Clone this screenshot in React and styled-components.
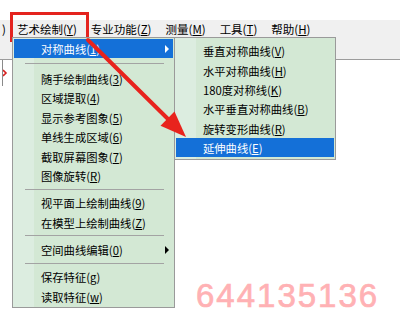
import React from "react";
import styled, { createGlobalStyle, css } from "styled-components";

const GlobalStyle = createGlobalStyle`
  html, body { margin: 0; padding: 0; background: #ffffff; }
  body { font-family: "Noto Sans CJK SC", "Noto Sans", sans-serif; }
`;

const Screen = styled.div`
  position: relative;
  width: 400px;
  height: 326px;
  overflow: hidden;
  background: #ffffff;
  display: flex;
  flex-direction: column;
  color: #000;
`;

const TopGap = styled.div`
  height: 20px;
  flex: none;
`;

const MenuBar = styled.div`
  height: 17px;
  flex: none;
  background: #f0f0f0;
  display: flex;
  align-items: center;
  font-size: 11.5px;
`;

const BarItem = styled.div`
  position: relative;
  padding: ${(p) => (p.$cut ? "0 4px 0 2px" : "0 7px")};
  line-height: 17px;
  padding-top: 1px;
  white-space: nowrap;
  ${(p) =>
    p.$marked &&
    css`
      &::after {
        content: "";
        position: absolute;
        left: 0;
        right: -5px;
        top: -8px;
        bottom: -4px;
        border: 3px solid #e4231e;
      }
    `}
`;

const Toolbar = styled.div`
  height: 22px;
  flex: none;
  background: #f0f0f0;
  border-bottom: 1px solid #9c9c9c;
`;

const Workspace = styled.div`
  flex: 1;
  padding-left: 2px;
`;

const CanvasEdge = styled.div`
  width: 6px;
  height: 26px;
  border-left: 1px solid #8a8a8a;
  display: flex;
  align-items: center;
`;

const DropMenu = styled.div`
  position: absolute;
  left: ${(p) => p.$left}px;
  top: ${(p) => p.$top}px;
  width: ${(p) => p.$width}px;
  box-sizing: border-box;
  border: 1px solid #9a9a9a;
  background: linear-gradient(to right, #dcede0 0 21px, #d3e8d4 21px);
  padding: ${(p) => p.$pad};
  font-size: 11.3px;
  display: flex;
  flex-direction: column;
`;

const MenuRow = styled.div`
  position: relative;
  height: 19.4px;
  box-sizing: border-box;
  margin: 0 1px;
  padding: 1px 0 0 27px;
  display: flex;
  align-items: center;
  white-space: nowrap;
  background: ${(p) => (p.$active ? "#1470d8" : "transparent")};
  color: ${(p) => (p.$active ? "#ffffff" : "#000000")};
  u { text-underline-offset: 1px; }
`;

const Caret = styled.span`
  position: absolute;
  right: 4px;
  top: 50%;
  margin-top: -3.5px;
  width: 0;
  height: 0;
  border-left: 4px solid currentColor;
  border-top: 4px solid transparent;
  border-bottom: 4px solid transparent;
`;

const Separator = styled.div`
  height: ${(p) => p.$h}px;
  display: flex;
  align-items: center;
  padding: 0 10px 0 12px;
  &::before {
    content: "";
    flex: 1;
    height: 1px;
    background: #a3a3a3;
  }
`;

const Overlay = styled.svg`
  position: absolute;
  left: 0;
  top: 0;
  pointer-events: none;
`;

const Watermark = styled.div`
  position: absolute;
  left: 196px;
  top: 279px;
  font-family: "Liberation Sans", Arial, sans-serif;
  font-size: 33px;
  line-height: 33px;
  letter-spacing: 2px;
  color: #ffb1b4;
  -webkit-text-stroke: 0.7px #ffb1b4;
  pointer-events: none;
`;

const Item = ({ label, k, active, sub }) => (
  <MenuRow $active={active}>
    <span>
      {label}(<u>{k}</u>)
    </span>
    {sub && <Caret />}
  </MenuRow>
);

const mainGroups = [
  { sep: 10.4, items: [["对称曲线", "1", true, true]] },
  {
    sep: 8,
    items: [
      ["随手绘制曲线", "3"],
      ["区域提取", "4"],
      ["显示参考图象", "5"],
      ["单线生成区域", "6"],
      ["截取屏幕图象", "7"],
      ["图像旋转", "R"],
    ],
  },
  {
    sep: 8,
    items: [
      ["视平面上绘制曲线", "9"],
      ["在模型上绘制曲线", "Z"],
    ],
  },
  { sep: 8, items: [["空间曲线编辑", "0", false, true]] },
  {
    sep: 0,
    items: [
      ["保存特征", "g"],
      ["读取特征", "w"],
    ],
  },
];

const subItems = [
  ["垂直对称曲线", "V"],
  ["水平对称曲线", "H"],
  ["180度对称线", "K"],
  ["水平垂直对称曲线", "B"],
  ["旋转变形曲线", "R"],
  ["延伸曲线", "E", true],
];

export default function App() {
  return (
    <>
      <GlobalStyle />
      <Screen>
        <TopGap />
        <MenuBar>
          <BarItem $cut>)</BarItem>
          <BarItem $marked>
            艺术绘制(<u>Y</u>)
          </BarItem>
          <BarItem>
            专业功能(<u>Z</u>)
          </BarItem>
          <BarItem>
            测量(<u>M</u>)
          </BarItem>
          <BarItem>
            工具(<u>T</u>)
          </BarItem>
          <BarItem>
            帮助(<u>H</u>)
          </BarItem>
        </MenuBar>
        <Toolbar />
        <Workspace>
          <CanvasEdge>
            <svg width="5" height="8" viewBox="0 0 5 8">
              <path d="M0 1 L3 4 L0 7" stroke="#d62020" strokeWidth="1.6" fill="none" />
            </svg>
          </CanvasEdge>
        </Workspace>

        <DropMenu $left={12} $top={37} $width={163} $pad="1px 0 1px">
          {mainGroups.map((g, gi) => (
            <React.Fragment key={gi}>
              {g.items.map(([label, k, active, sub]) => (
                <Item key={label} label={label} k={k} active={active} sub={sub} />
              ))}
              {g.sep > 0 && <Separator $h={g.sep} />}
            </React.Fragment>
          ))}
        </DropMenu>

        <DropMenu $left={174} $top={37} $width={162} $pad="3px 0 2px">
          {subItems.map(([label, k, active]) => (
            <Item key={label} label={label} k={k} active={active} />
          ))}
        </DropMenu>

        <Overlay width="400" height="326" viewBox="0 0 400 326">
          <line x1="88" y1="40" x2="168" y2="119" stroke="#e8231d" strokeWidth="4" strokeLinecap="round" />
          <polygon points="186,137 160.5,125.8 174.5,111.6" fill="#e8231d" />
        </Overlay>

        <Watermark>644135136</Watermark>
      </Screen>
    </>
  );
}
